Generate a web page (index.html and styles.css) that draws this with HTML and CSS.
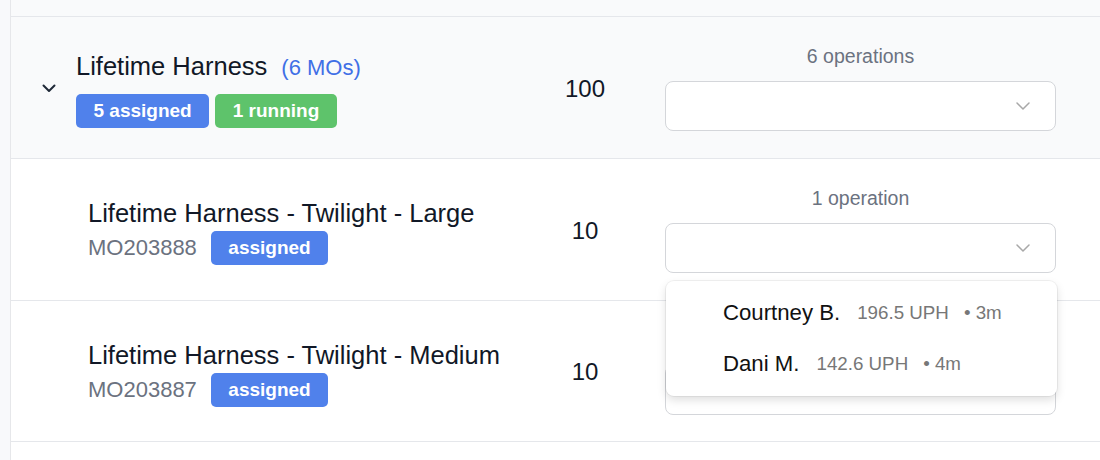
FILE: index.html
```html
<!DOCTYPE html>
<html>
<head>
<meta charset="utf-8">
<link rel="stylesheet" href="styles.css">
</head>
<body>
<div class="page">
  <div class="rail"></div>
  <div class="table">
    <div class="spacer"></div>

    <div class="row row-group">
      <div class="name name-group">
        <svg class="toggle" width="14" height="9" viewBox="0 0 14 9"><path d="M1.5 1.5 L7 7 L12.5 1.5" fill="none" stroke="#1f2937" stroke-width="2" stroke-linecap="round" stroke-linejoin="round"/></svg>
        <div class="name-block">
          <div class="title">Lifetime Harness<span class="count">(6 MOs)</span></div>
          <div class="badges badges-group">
            <span class="badge badge-blue">5 assigned</span>
            <span class="badge badge-green">1 running</span>
          </div>
        </div>
      </div>
      <div class="qty">100</div>
      <div class="ops">
        <div class="ops-label">6 operations</div>
        <div class="select-wrap">
          <div class="select">
            <svg class="caret" width="14" height="8" viewBox="0 0 14 8"><path d="M1 1 L7 7 L13 1" fill="none" stroke="#a8a8a8" stroke-width="1.5" stroke-linecap="round" stroke-linejoin="round"/></svg>
          </div>
        </div>
      </div>
    </div>

    <div class="row">
      <div class="name name-child">
        <div class="name-block">
          <div class="title">Lifetime Harness - Twilight - Large</div>
          <div class="badges badges-child">
            <span class="mo">MO203888</span>
            <span class="badge badge-blue">assigned</span>
          </div>
        </div>
      </div>
      <div class="qty">10</div>
      <div class="ops">
        <div class="ops-label">1 operation</div>
        <div class="select-wrap">
          <div class="select">
            <svg class="caret" width="14" height="8" viewBox="0 0 14 8"><path d="M1 1 L7 7 L13 1" fill="none" stroke="#a8a8a8" stroke-width="1.5" stroke-linecap="round" stroke-linejoin="round"/></svg>
          </div>
          <div class="menu">
            <div class="menu-item"><span class="person">Courtney B.</span><span class="uph">196.5 UPH</span><span class="dur">• 3m</span></div>
            <div class="menu-item"><span class="person">Dani M.</span><span class="uph">142.6 UPH</span><span class="dur">• 4m</span></div>
          </div>
        </div>
      </div>
    </div>

    <div class="row row-last">
      <div class="name name-child">
        <div class="name-block">
          <div class="title">Lifetime Harness - Twilight - Medium</div>
          <div class="badges badges-child">
            <span class="mo">MO203887</span>
            <span class="badge badge-blue">assigned</span>
          </div>
        </div>
      </div>
      <div class="qty">10</div>
      <div class="ops">
        <div class="ops-label">1 operation</div>
        <div class="select-wrap">
          <div class="select">
            <svg class="caret" width="14" height="8" viewBox="0 0 14 8"><path d="M1 1 L7 7 L13 1" fill="none" stroke="#a8a8a8" stroke-width="1.5" stroke-linecap="round" stroke-linejoin="round"/></svg>
          </div>
        </div>
      </div>
    </div>
  </div>
</div>
</body>
</html>
```

FILE: styles.css
```css
* { box-sizing: border-box; }

html, body {
  margin: 0;
  padding: 0;
  background: #ffffff;
}

body {
  font-family: "Liberation Sans", Arial, Helvetica, sans-serif;
  color: #111827;
  width: 1100px;
  height: 460px;
  overflow: hidden;
}

.page {
  display: flex;
  height: 460px;
}

.rail {
  width: 11px;
  flex: none;
  background: #f8f9fb;
  border-right: 1px solid #e6e7ea;
}

.table {
  flex: 1;
  min-width: 0;
}

.spacer {
  height: 17px;
  background: #f9fafb;
  border-bottom: 1px solid #e5e7eb;
}

.row {
  display: grid;
  grid-template-columns: minmax(0, 1fr) 120px 411px;
  padding-right: 44px;
  height: 142px;
  align-items: center;
  border-bottom: 1px solid #e5e7eb;
  background: #ffffff;
}

.row-last { height: 141px; }

.row-group { background: #f9fafb; }

.name {
  display: flex;
  align-items: center;
  margin-top: 4px;
}

.name-group { padding-left: 31px; }
.name-child { padding-left: 77px; }

.toggle {
  flex: none;
  margin-right: 20px;
  margin-bottom: 3px;
}

.name-block {
  display: flex;
  flex-direction: column;
}

.title {
  font-size: 25.5px;
  line-height: 30px;
  color: #111827;
  white-space: nowrap;
}

.count {
  margin-left: 14px;
  font-size: 22px;
  color: #3f6fe6;
}

.badges {
  display: flex;
  align-items: center;
}

.badges-group {
  margin-top: 11px;
  gap: 6px;
}

.badges-child {
  margin-top: 3px;
  gap: 14px;
}

.mo {
  font-size: 22px;
  color: #6b7280;
}

.badge {
  display: inline-flex;
  align-items: center;
  height: 34px;
  padding: 0 17.5px;
  border-radius: 5px;
  font-size: 19px;
  font-weight: 700;
  color: #ffffff;
}

.badge-blue { background: #5081eb; }
.badge-green { background: #5ec36b; }

.qty {
  text-align: center;
  font-size: 24px;
  line-height: 28px;
  margin-top: 2px;
  color: #111827;
}

.ops {
  padding-left: 20px;
  display: flex;
  flex-direction: column;
  margin-top: 2px;
}

.ops-label {
  text-align: center;
  font-size: 19.5px;
  line-height: 20px;
  color: #6b7280;
  margin-bottom: 15px;
}

.select-wrap {
  position: relative;
}

.select {
  height: 50px;
  border: 1px solid #d4d6da;
  border-radius: 8px;
  background: #ffffff;
  display: flex;
  align-items: center;
  justify-content: flex-end;
  padding-right: 25px;
}

.caret { display: block; }

.menu {
  position: absolute;
  top: calc(100% + 8px);
  left: 1px;
  width: 391px;
  z-index: 10;
  background: #ffffff;
  border-radius: 8px;
  padding: 7px 0 7px 57px;
  box-shadow: 0 0 0 1px rgba(0, 0, 0, 0.05), 0 4px 10px rgba(0, 0, 0, 0.13);
}

.menu-item {
  height: 50.5px;
  display: flex;
  align-items: center;
  white-space: nowrap;
}

.person {
  font-size: 22.2px;
  color: #111111;
}

.uph {
  margin-left: 17px;
  font-size: 18.75px;
  color: #777777;
}

.dur {
  margin-left: 15px;
  font-size: 18.75px;
  color: #777777;
}
```
